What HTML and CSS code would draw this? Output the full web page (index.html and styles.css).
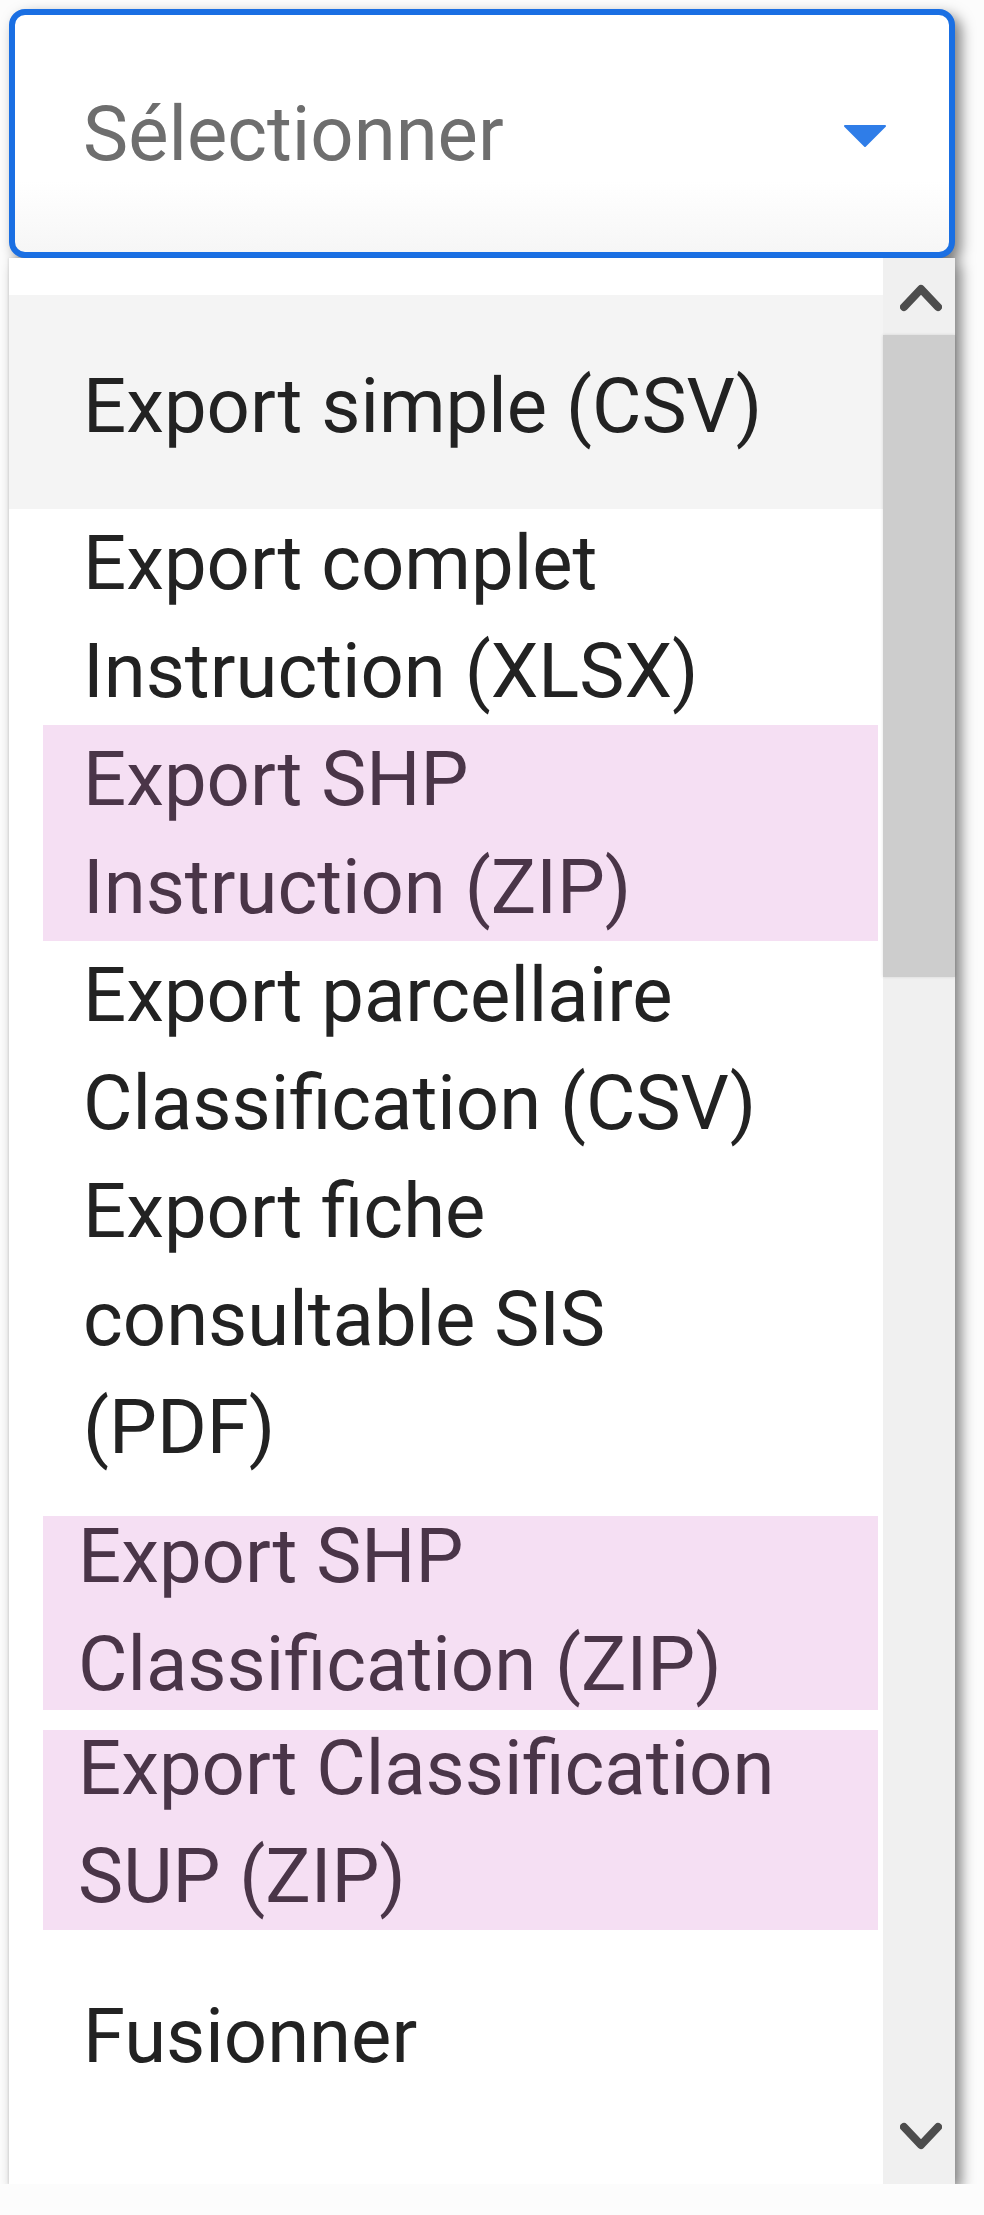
FILE: index.html
```html
<!DOCTYPE html>
<html lang="fr">
<head>
<meta charset="utf-8">
<title>Sélectionner</title>
<link rel="stylesheet" href="styles.css">
</head>
<body>
<div class="wrap">
  <div class="select">
    <span class="placeholder">Sélectionner</span>
    <svg class="caret" width="44" height="24" viewBox="0 0 44 24"><path d="M2 2 H42 L22 22 Z" fill="#2f7de8" stroke="#2f7de8" stroke-width="2" stroke-linejoin="round"/></svg>
  </div>
  <div class="panel">
    <div class="list">
      <div class="opt single active">Export simple (CSV)</div>
      <div class="opt">Export complet Instruction (XLSX)</div>
      <div class="opt hl">Export SHP Instruction (ZIP)</div>
      <div class="opt">Export parcellaire Classification (CSV)</div>
      <div class="opt">Export fiche consultable SIS (PDF)</div>
      <div class="opt band first">Export SHP Classification (ZIP)</div>
      <div class="opt band second">Export Classification SUP (ZIP)</div>
      <div class="opt single last">Fusionner</div>
    </div>
    <div class="scrollbar">
      <div class="sb-btn up">
        <svg width="42" height="30" viewBox="0 0 42 30"><polyline points="4,25 21,7 38,25" fill="none" stroke="#4d4d4d" stroke-width="8" stroke-linecap="round" stroke-linejoin="round"/></svg>
      </div>
      <div class="sb-thumb"></div>
      <div class="sb-track"></div>
      <div class="sb-btn down">
        <svg width="42" height="30" viewBox="0 0 42 30"><polyline points="4,5 21,23 38,5" fill="none" stroke="#4d4d4d" stroke-width="8" stroke-linecap="round" stroke-linejoin="round"/></svg>
      </div>
    </div>
  </div>
</div>
</body>
</html>
```

FILE: styles.css
```css
html, body {
  margin: 0;
  padding: 0;
  background: #fcfcfc;
}

body {
  font-family: Roboto, "Liberation Sans", Arial, sans-serif;
  font-size: 76px;
}

.wrap {
  margin: 9px 0 0 9px;
  width: 946px;
  filter: drop-shadow(6px 6px 7px rgba(0, 0, 0, 0.5));
}

.select {
  box-sizing: border-box;
  height: 249px;
  border: 6px solid #1a6fe3;
  border-radius: 16px;
  background: linear-gradient(#ffffff 70%, #f6f6f6);
  display: flex;
  align-items: center;
  justify-content: space-between;
  padding: 0 62px 0 68px;
}

.placeholder {
  color: #6e6e6e;
  line-height: 108px;
}

.caret {
  display: block;
  margin-top: 4px;
}

.panel {
  display: flex;
  background: #ffffff;
  box-shadow: -1px 0 2px rgba(0, 0, 0, 0.08);
}

.list {
  flex: 1;
  padding: 37px 0 42px 0;
}

.opt {
  color: #222222;
  line-height: 108px;
  padding: 0 83px 0 74px;
}

.opt.single {
  padding-top: 57px;
  padding-bottom: 49px;
}

.opt.last {
  padding-top: 52px;
  padding-bottom: 52px;
}

.opt.active {
  background: #f4f4f4;
}

.opt.hl {
  background: #f5dff3;
  color: #4a3548;
  margin: 0 5px 0 34px;
  padding: 0 78px 0 40px;
}

.opt.band {
  color: #4a3548;
  margin: 0 5px 0 34px;
  padding: 0 78px 0 35px;
}

.opt.first {
  margin-top: 21px;
  background: linear-gradient(to bottom, transparent 14px, #f5dff3 14px, #f5dff3 208px, transparent 208px);
}

.opt.second {
  margin-top: -4px;
  background: linear-gradient(to bottom, transparent 16px, #f5dff3 16px);
}

.scrollbar {
  width: 72px;
  background: #f0f0f0;
  display: flex;
  flex-direction: column;
}

.sb-btn {
  display: flex;
  justify-content: center;
  align-items: center;
}

.sb-btn.up {
  height: 77px;
  padding-left: 4px;
}

.sb-btn.down {
  height: 62px;
  align-items: flex-start;
  padding-left: 4px;
}

.sb-thumb {
  height: 642px;
  background: #cdcdcd;
  box-shadow: 0 0 3px rgba(0, 0, 0, 0.12);
}

.sb-track {
  flex: 1;
}
```
